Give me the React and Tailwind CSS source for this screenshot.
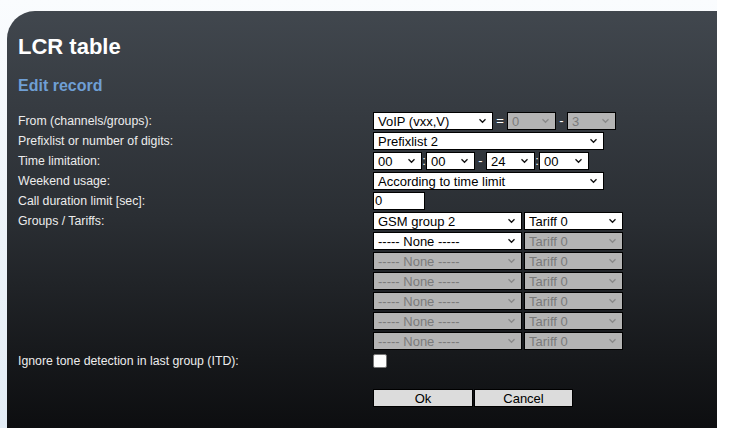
import React from "react";

const font = { fontFamily: "'Liberation Sans', Arial, sans-serif" };

function Chevron({ disabled }) {
  return (
    <svg width="9" height="6" viewBox="0 0 9 6" className="shrink-0">
      <path
        d="M1.5 1.2 L4.5 4.3 L7.5 1.2"
        fill="none"
        stroke={disabled ? "#8a8a8a" : "#111"}
        strokeWidth="1.3"
      />
    </svg>
  );
}

function Select({ value, width, disabled }) {
  return (
    <div
      className={`flex h-[18px] items-center justify-between border border-black pl-[4px] pr-[5px] text-[13px] leading-none ${
        disabled ? "bg-[#b4b4b4] text-[#7b7b7b]" : "bg-white text-black"
      }`}
      style={{ width }}
    >
      <span className="whitespace-pre">{value}</span>
      <Chevron disabled={disabled} />
    </div>
  );
}

function Row({ label, children }) {
  return (
    <div className="flex h-[20px] items-center">
      <div className="w-[355px] text-[12.3px] text-[#ececec]">{label}</div>
      <div className="flex items-center">{children}</div>
    </div>
  );
}

const Sep = ({ ch, w }) => (
  <span className="text-center text-[13px] text-white" style={{ width: w }}>
    {ch}
  </span>
);

export default function App() {
  const groups = [
    ["GSM group 2", false, "Tariff 0", false],
    ["----- None -----", false, "Tariff 0", true],
    ["----- None -----", true, "Tariff 0", true],
    ["----- None -----", true, "Tariff 0", true],
    ["----- None -----", true, "Tariff 0", true],
    ["----- None -----", true, "Tariff 0", true],
    ["----- None -----", true, "Tariff 0", true],
  ];

  return (
    <div className="h-[428px] w-[749px] overflow-hidden bg-white" style={font}>
      <div className="h-full w-[717px] bg-gradient-to-b from-[#fafcfe] to-[#e3ecf5] pl-[7px] pt-[11px]">
        <div className="h-[417px] w-[710px] rounded-tl-[28px] bg-gradient-to-b from-[#41474e] via-[#2a2e33] to-[#0d0e10] pl-[11px] pt-[23px]">
          <h1 className="text-[22px] font-bold leading-[26px] text-white">LCR table</h1>
          <h2 className="mt-[16px] text-[16px] font-bold leading-[20px] text-[#6f9fd5]">
            Edit record
          </h2>

          <div className="mt-[15px] flex flex-col">
            <Row label="From (channels/groups):">
              <Select value="VoIP (vxx,V)" width={120} />
              <Sep ch="=" w={14} />
              <Select value="0" width={49} disabled />
              <Sep ch="-" w={11} />
              <Select value="3" width={49} disabled />
            </Row>
            <Row label="Prefixlist or number of digits:">
              <Select value="Prefixlist 2" width={231} />
            </Row>
            <Row label="Time limitation:">
              <Select value="00" width={49} />
              <Sep ch=":" w={4} />
              <Select value="00" width={49} />
              <Sep ch="-" w={11} />
              <Select value="24" width={49} />
              <Sep ch=":" w={4} />
              <Select value="00" width={50} />
            </Row>
            <Row label="Weekend usage:">
              <Select value="According to time limit" width={231} />
            </Row>
            <Row label="Call duration limit [sec]:">
              <div className="flex h-[18px] w-[52px] items-center border border-black bg-white pl-[1px] text-[13px] text-black">
                0
              </div>
            </Row>
            {groups.map(([g, gd, t, td], i) => (
              <Row key={i} label={i === 0 ? "Groups / Tariffs:" : ""}>
                <Select value={g} width={149} disabled={gd} />
                <div className="w-[2px]" />
                <Select value={t} width={99} disabled={td} />
              </Row>
            ))}
            <Row label="Ignore tone detection in last group (ITD):">
              <div className="h-[14px] w-[14px] rounded-[2px] border border-[#767676] bg-white" />
            </Row>
            <div className="mt-[18px] flex pl-[355px]">
              <button className="h-[18px] w-[100px] border border-black bg-[#dcdcdc] text-[13px] leading-none text-black">
                Ok
              </button>
              <button className="ml-[1px] h-[18px] w-[99px] border border-black bg-[#dcdcdc] text-[13px] leading-none text-black">
                Cancel
              </button>
            </div>
          </div>
        </div>
      </div>
    </div>
  );
}
